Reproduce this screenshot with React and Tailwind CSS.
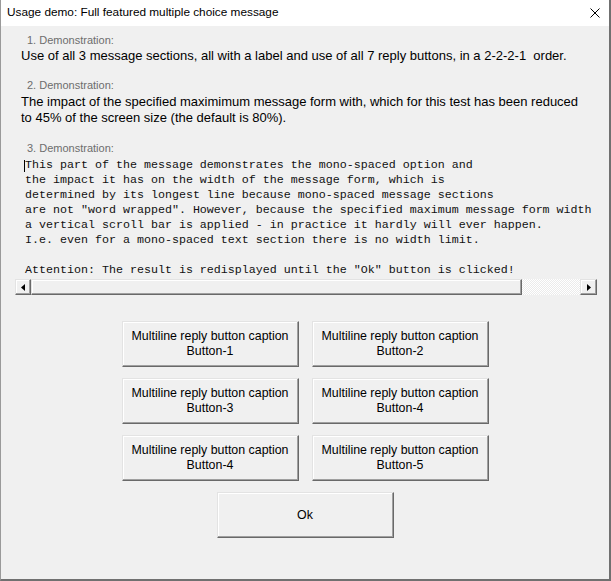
export default function App() {
  const btn =
    "w-[177px] h-[46px] bg-[#f0f0f0] border border-t-[#e3e3e3] border-l-[#e3e3e3] border-r-[#696969] border-b-[#696969] shadow-[inset_-1px_-1px_#a0a0a0,inset_1px_1px_#ffffff] flex flex-col items-center justify-center text-[12.4px] leading-[15px] text-black";
  const mono = [
    "This part of the message demonstrates the mono-spaced option and",
    "the impact it has on the width of the message form, which is",
    "determined by its longest line because mono-spaced message sections",
    'are not "word wrapped". However, because the specified maximum message form width',
    "a vertical scroll bar is applied - in practice it hardly will ever happen.",
    "I.e. even for a mono-spaced text section there is no width limit.",
    "",
    'Attention: The result is redisplayed until the "Ok" button is clicked!',
  ];
  const scrollBtn =
    "h-[16px] bg-[#f0f0f0] border border-t-[#e3e3e3] border-l-[#e3e3e3] border-r-[#696969] border-b-[#696969] shadow-[inset_-1px_-1px_#a0a0a0,inset_1px_1px_#ffffff] flex items-center justify-center";
  return (
    <div className="w-[611px] h-[581px] bg-[#f0f0f0] border-l border-l-[#9a9a9a] border-r-2 border-r-[#707070] border-b-2 border-b-[#707070] flex flex-col font-['Liberation_Sans',Arial,sans-serif]">
      <div className="h-[26px] bg-white flex items-center pl-[6px] pr-[9px] shrink-0">
        <span className="text-[11.8px] text-black">Usage demo: Full featured multiple choice message</span>
        <svg className="ml-auto" width="10" height="10" viewBox="0 0 10 10">
          <path d="M0.5 0.5 L9.5 9.5 M9.5 0.5 L0.5 9.5" stroke="#000" strokeWidth="1" fill="none" />
        </svg>
      </div>

      <div className="pl-[20px] pt-[7px]">
        <div className="pl-[6px] text-[11px] leading-[14px] text-[#6d6d6d]">1. Demonstration:</div>
        <div className="mt-[1px] text-[13px] leading-[15px] text-black">
          Use of all 3 message sections, all with a label and use of all 7 reply buttons, in a 2-2-2-1&nbsp; order.
        </div>

        <div className="mt-[15px] pl-[6px] text-[11px] leading-[14px] text-[#6d6d6d]">2. Demonstration:</div>
        <div className="mt-[2px] text-[13px] leading-[15.5px] text-black">
          <div>The impact of the specified maximimum message form with, which for this test has been reduced</div>
          <div>to 45% of the screen size (the default is 80%).</div>
        </div>

        <div className="mt-[16px] pl-[6px] text-[11px] leading-[14px] text-[#6d6d6d]">3. Demonstration:</div>
      </div>

      <div className="ml-[14px] w-[582px] mt-[3px]">
        <div className="relative pl-[10px] pb-[1px] font-['Liberation_Mono','Courier_New',monospace] text-[11.667px] leading-[15px] text-[#111]">
          <div className="absolute left-[9px] top-[2px] w-px h-[12px] bg-black" />
          {mono.map((l, i) => (
            <div key={i} className="whitespace-pre h-[15px]">
              {l}
            </div>
          ))}
        </div>
        <div className="flex h-[16px]">
          <div className={scrollBtn + " w-[16px]"}>
            <svg width="4" height="7" viewBox="0 0 4 7">
              <path d="M4 0 L0 3.5 L4 7 Z" fill="#000" />
            </svg>
          </div>
          <div className={scrollBtn + " w-[491px]"} />
          <div className="w-[58px] h-[16px] bg-[repeating-conic-gradient(#ffffff_0_25%,#ebebeb_0_50%)] bg-[length:2px_2px]" />
          <div className={scrollBtn + " w-[17px]"}>
            <svg width="4" height="7" viewBox="0 0 4 7">
              <path d="M0 0 L4 3.5 L0 7 Z" fill="#000" />
            </svg>
          </div>
        </div>
      </div>

      <div className="mt-[26px] flex flex-col items-center gap-[11px]">
        <div className="flex gap-[13px]">
          <div className={btn}>
            <span>Multiline reply button caption</span>
            <span>Button-1</span>
          </div>
          <div className={btn}>
            <span>Multiline reply button caption</span>
            <span>Button-2</span>
          </div>
        </div>
        <div className="flex gap-[13px]">
          <div className={btn}>
            <span>Multiline reply button caption</span>
            <span>Button-3</span>
          </div>
          <div className={btn}>
            <span>Multiline reply button caption</span>
            <span>Button-4</span>
          </div>
        </div>
        <div className="flex gap-[13px]">
          <div className={btn}>
            <span>Multiline reply button caption</span>
            <span>Button-4</span>
          </div>
          <div className={btn}>
            <span>Multiline reply button caption</span>
            <span>Button-5</span>
          </div>
        </div>
        <div className={btn}>
          <span>Ok</span>
        </div>
      </div>
    </div>
  );
}
